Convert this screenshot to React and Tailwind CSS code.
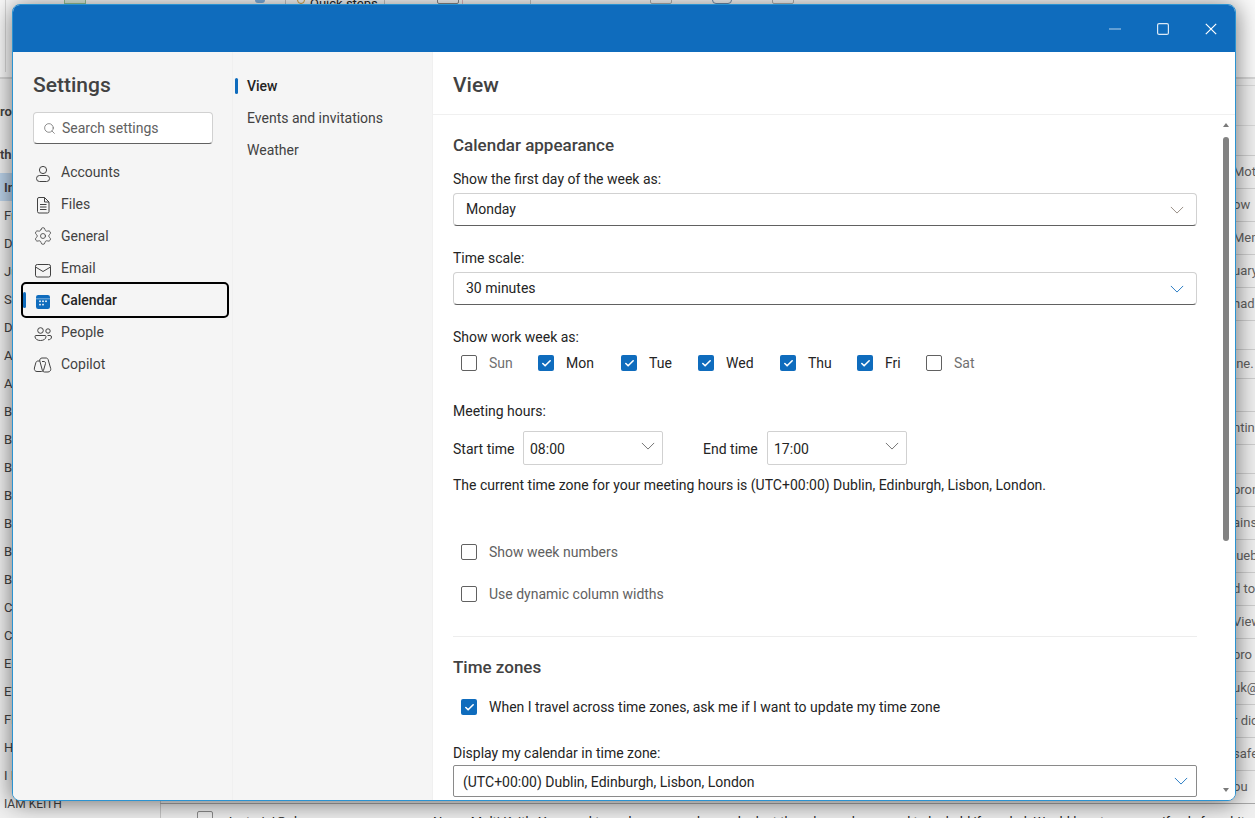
import { Search, Check, Settings } from 'lucide-react'

const font = { fontFamily: 'Roboto' }

function AccountIcon({ className }) {
  return (
    <svg viewBox="0 0 20 20" fill="none" stroke="currentColor" className={className}>
      <circle cx="10" cy="8" r="3.600" />
      <rect x="3.500" y="13.500" width="13" height="6" rx="3" />
    </svg>
  )
}

function FileIcon({ className }) {
  return (
    <svg viewBox="0 0 20 20" fill="none" stroke="currentColor" className={className}>
      <path d="M6 3.500h5.500l4.500 4.500v9.500a1.500 1.500 0 0 1-1.500 1.500H6a1.500 1.500 0 0 1-1.500-1.500V5A1.500 1.500 0 0 1 6 3.500z" />
      <path d="M11.500 3.500V8H16M7 10.500h6.500M7 13h6.500M7 15.500h6.500" />
    </svg>
  )
}

function MailIcon({ className }) {
  return (
    <svg viewBox="0 0 20 20" fill="none" stroke="currentColor" className={className}>
      <rect x="2.500" y="6.500" width="15" height="12.500" rx="1.800" />
      <path d="M2.500 9l7.500 4.500L17.500 9" />
    </svg>
  )
}

function CalendarIcon({ className }) {
  return (
    <svg viewBox="0 0 20 20" className={className}>
      <rect x="3" y="5" width="14" height="14" rx="2.200" fill="currentColor" />
      <path d="M3 8.800h14" stroke="#cfe0f1" strokeWidth="0.600" />
      <g fill="white">
        <rect x="6.200" y="10.500" width="1.600" height="1.600" />
        <rect x="9.200" y="10.500" width="1.600" height="1.600" />
        <rect x="12.200" y="10.500" width="1.600" height="1.600" />
        <rect x="6.200" y="13.800" width="1.600" height="1.600" />
        <rect x="9.200" y="13.800" width="1.600" height="1.600" />
      </g>
    </svg>
  )
}

function PeopleIcon({ className }) {
  return (
    <svg viewBox="0 0 20 20" fill="none" stroke="currentColor" className={className}>
      <circle cx="7.500" cy="8.500" r="2.800" />
      <circle cx="15" cy="9" r="2.200" />
      <path d="M3 13.500h9a1 1 0 0 1 1 1c0 2.500-2.300 4-5.500 4S2 17 2 14.500a1 1 0 0 1 1-1z" />
      <path d="M14.500 13.500H17a1.500 1.500 0 0 1 1.500 1.500c0 1.800-1.500 2.800-3.500 2.800" />
    </svg>
  )
}

function CopilotIcon({ className }) {
  return (
    <svg viewBox="0 0 20 20" fill="none" stroke="currentColor" className={className}>
      <path d="M9 4h4c1 0 1.800.6 2.100 1.500l2.600 9c.4 1.500-.6 3.500-2.700 3.500h-3.500c-1 0-1.800-.6-2.100-1.500L6.800 7C6.300 5.500 7.500 4 9 4z" />
      <path d="M6.800 7H5c-1 0-1.800.6-2.100 1.500l-1.500 5.500C1 16 2.200 17.500 4 17.500h4.500c1 0 1.800-.6 2.100-1.500l1.900-6.500c.3-1-.5-2-1.500-2H9" />
    </svg>
  )
}

const navItems = [
  { label: 'Accounts', icon: AccountIcon },
  { label: 'Files', icon: FileIcon },
  { label: 'General', icon: Settings },
  { label: 'Email', icon: MailIcon },
  { label: 'Calendar', icon: CalendarIcon, active: true },
  { label: 'People', icon: PeopleIcon },
  { label: 'Copilot', icon: CopilotIcon },
]

const days = [
  { label: 'Sun', checked: false, w: 'w-[77px]' },
  { label: 'Mon', checked: true, w: 'w-[83px]' },
  { label: 'Tue', checked: true, w: 'w-[77px]' },
  { label: 'Wed', checked: true, w: 'w-[82px]' },
  { label: 'Thu', checked: true, w: 'w-[77px]' },
  { label: 'Fri', checked: true, w: 'w-[69px]' },
  { label: 'Sat', checked: false, w: 'w-[60px]' },
]

const leftRows = ['Fr', 'D', 'Ju', 'Se', 'D', 'A', 'A', 'B.', 'B', 'B', 'B', 'B.', 'BT', 'BT', 'C', 'C', 'EC', 'EV', 'Fl', 'H', 'I I']

// rows in the mail list that stick out to the right of the dialog
const rightRows = [
  { h: 'h-[33px]', t: 'Moto' },
  { h: 'h-[33px]', t: 'ow' },
  { h: 'h-[33px]', t: 'Men' },
  { h: 'h-[33px]', t: 'uary' },
  { h: 'h-[33px]', t: 'had' },
  { h: 'h-[29px]', t: '' },
  { h: 'h-[29px]', t: 'ine.' },
  { h: 'h-[33px]', t: '' },
  { h: 'h-[33px]', t: 'ntinu' },
  { h: 'h-[29px]', t: '' },
  { h: 'h-[33px]', t: 'pron' },
  { h: 'h-[33px]', t: 'ains' },
  { h: 'h-[33px]', t: 'luebo' },
  { h: 'h-[33px]', t: 'd to' },
  { h: 'h-[33px]', t: 'View' },
  { h: 'h-[33px]', t: 'pro' },
  { h: 'h-[33px]', t: 'uk@' },
  { h: 'h-[33px]', t: 'r dic' },
  { h: 'h-[33px]', t: 'safe' },
  { h: 'h-[33px]', t: 'ou' },
]

function Chevron({ className }) {
  return (
    <svg viewBox="0 0 16 9" fill="none" stroke="currentColor" className={className}>
      <path d="M1 1l7 7 7-7" />
    </svg>
  )
}

function Checkbox({ checked }) {
  if (checked) {
    return (
      <span className="w-[16px] h-[16px] rounded-[2px] bg-[#0f6cbd] flex items-center justify-center shrink-0">
        <Check className="w-[11px] h-[11px] text-white" strokeWidth={3.500} />
      </span>
    )
  }
  return <span className="w-[16px] h-[16px] rounded-[2px] border border-[#616161] bg-white shrink-0" />
}

function Select({ value, chevron = 'text-[#8a7f76]', className = '' }) {
  return (
    <div className={`h-[33px] flex items-center justify-between pl-[12px] pr-[12px] rounded-[4px] border border-[#d1d1d1] border-b-[#616161] bg-white ${className}`}>
      <span className="text-[14px] text-[#242424]">{value}</span>
      <Chevron className={`w-[14px] h-[8px] ${chevron}`} />
    </div>
  )
}

function TimeSelect({ value }) {
  return (
    <div className="w-[140px] h-[34px] flex items-center justify-between pl-[6px] pr-[7px] border border-[#d1d1d1] rounded-[2px] bg-white">
      <span className="pt-[2px] text-[14px] text-[#242424]">{value}</span>
      <Chevron className="w-[14px] h-[8px] text-[#616161] -translate-y-[2px]" />
    </div>
  )
}

function BackgroundApp() {
  return (
    <div className="absolute inset-0 bg-[#f0f0f0] overflow-hidden text-[13px] text-[#424242]">
      <div className="relative h-[79px] bg-[#fafafa] border-b-2 border-[#d6d6d6]">
        <span className="absolute left-[5px] top-0 h-[72px] w-px bg-[#d8d8d8]" />
        <span className="absolute left-[64px] -top-[10px] w-[22px] h-[14px] border border-[#9ac79a] bg-[#dff0df]" />
        <span className="absolute left-[255px] -top-[3px] w-[10px] h-[6px] rounded-full bg-[#7fb0e0]" />
        <span className="absolute left-[285px] top-0 h-[6px] w-px bg-[#c8c8c8]" />
        <span className="absolute left-[297px] -top-[4px] w-[8px] h-[8px] rounded-full border border-[#d9a441]" />
        <span className="absolute left-[384px] top-0 h-[6px] w-px bg-[#c8c8c8]" />
        <span className="absolute left-[437px] -top-[4px] w-[22px] h-[8px] border border-[#8a8a8a] rounded-[2px]" />
        <span className="absolute left-[462px] top-0 h-[6px] w-px bg-[#e3bcc4]" />
        <span className="absolute left-[530px] top-0 h-[6px] w-px bg-[#c8c8c8]" />
        <span className="absolute left-[650px] -top-[4px] w-[22px] h-[8px] border border-[#b5b5b5] rounded-[2px]" />
        <span className="absolute left-[712px] -top-[4px] w-[20px] h-[8px] rounded-full border border-[#6f8fb0]" />
        <span className="absolute left-[772px] -top-[4px] w-[22px] h-[8px] border border-[#b5b5b5] rounded-[2px]" />
        <span className="absolute left-[310px] -top-[6px] text-[13px] text-[#242424]">Quick steps</span>
      </div>
      <div className="absolute left-0 top-[102px] text-[13px] font-semibold">rou</div>
      <div className="absolute left-0 top-[145px] text-[13px] font-semibold">th</div>
      <div className="absolute left-0 top-[173px] w-[13px] h-[28px] bg-[#bcd3ea] text-[13px] font-semibold pt-[5px]">
        <span className="pl-[4px]">In</span>
      </div>
      <div className="absolute left-[4px] top-[202px] w-[156px] flex flex-col">
        {leftRows.map((l, i) => (
          <div key={i} className="h-[28px] flex items-center whitespace-nowrap text-[13px]">{l}</div>
        ))}
        <div className="h-[28px] flex items-center whitespace-nowrap text-[12px]">IAM KEITH</div>
      </div>
      <div className="absolute left-[160px] right-0 top-[85px] h-[41px] border-y border-[#d9d9d9]" />
      <div className="absolute left-[1233px] top-[155px] w-[22px] overflow-hidden flex flex-col border-t border-[#cfcfcf] text-[13px] text-[#616161]">
        {rightRows.map((r, i) => (
          <div key={i} className={`${r.h} shrink-0 border-b border-[#cfcfcf] flex items-center whitespace-nowrap`}>{r.t}</div>
        ))}
      </div>
      <div className="absolute left-[160px] top-[79px] bottom-0 w-px bg-[#c8c8c8]" />
      <div className="absolute left-[160px] right-0 top-[803px] h-[15px] border-t border-[#a8a8a8]">
        <span className="absolute left-[37px] top-[7px] w-[16px] h-[16px] rounded-[2px] border border-[#8a8a8a]" />
        <span className="absolute left-[65px] top-[8px] text-[13px] text-[#242424] whitespace-nowrap">Justrain!@uk</span>
        <span className="absolute left-[273px] top-[8px] text-[13px] text-[#242424] whitespace-nowrap">Name Multi Keith, You need to make sure you have a look at the rules and you need to be held if needed. Would love to see you if only for a bit</span>
      </div>
    </div>
  )
}

export default function App() {
  return (
    <div className="relative w-[1255px] h-[818px] overflow-hidden" style={font}>
      <BackgroundApp />

      {/* settings window */}
      <div className="absolute left-[12px] top-[4px] w-[1224px] h-[797px] flex flex-col rounded-[8px] overflow-hidden border border-[#2b93d1] bg-white shadow-[0_2px_24px_rgba(0,0,0,0.55)]">
        <div className="h-[47px] shrink-0 bg-[#0f6cbd] flex items-center justify-end text-white">
          <div className="w-[48px] flex justify-center">
            <svg viewBox="0 0 12 12" className="w-[12px] h-[12px] text-[#b5d2ec]" fill="none" stroke="currentColor" strokeWidth="1.200"><path d="M0 6h12" /></svg>
          </div>
          <div className="w-[48px] flex justify-center">
            <svg viewBox="0 0 12 12" className="w-[12px] h-[12px] text-[#dbe9f6]" fill="none" stroke="currentColor" strokeWidth="1.200"><rect x="0.600" y="0.600" width="10.800" height="10.800" rx="1.500" /></svg>
          </div>
          <div className="w-[48px] flex justify-center">
            <svg viewBox="0 0 12 12" className="w-[12px] h-[12px]" fill="none" stroke="currentColor" strokeWidth="1.200"><path d="M.8.8l10.400 10.400M11.200.8L.8 11.200" /></svg>
          </div>
        </div>

        <div className="flex-1 flex min-h-0">
          {/* first column */}
          <div className="w-[220px] shrink-0 bg-[#f5f5f5] border-r border-[#f0f0f0] pt-[19px]">
            <div className="pl-[20px] text-[21px] leading-[28px] font-medium text-[#424242]">Settings</div>
            <div className="ml-[20px] mt-[13px] w-[180px] h-[32px] flex items-center pl-[9px] gap-[6px] bg-white rounded-[4px] border border-[#d1d1d1] border-b-[#616161]">
              <Search className="w-[13px] h-[13px] text-[#616161]" strokeWidth={1.300} />
              <span className="text-[14px] text-[#616161]">Search settings</span>
            </div>
            <div className="mt-[12px] px-[8px] flex flex-col">
              {navItems.map(({ label, icon: Icon, active }) => (
                <div key={label} className={`relative w-[208px] flex items-center gap-[8px] ${active ? 'h-[36px] -my-[2px] pl-[10px] border-2 border-black rounded-[5px] z-10' : 'h-[32px] pl-[12px]'}`}>
                  {active && <span className="absolute left-0 top-[8px] w-[3px] h-[16px] bg-[#0f6cbd] rounded-full" />}
                  <Icon className={`w-[20px] h-[20px] ${active ? 'text-[#0f6cbd]' : 'text-[#424242]'}`} strokeWidth={1} />
                  <span className={`text-[14px] ${active ? 'font-medium text-[#242424]' : 'text-[#424242]'}`}>{label}</span>
                </div>
              ))}
            </div>
          </div>

          {/* second column */}
          <div className="w-[200px] shrink-0 bg-[#f5f5f5] border-r border-[#f0f0f0] pt-[18px] pl-[2px]">
            <div className="relative h-[32px] flex items-center pl-[12px] text-[14px] font-medium text-[#242424]">
              <span className="absolute left-0 top-[8px] w-[3px] h-[16px] bg-[#0f6cbd] rounded-full" />
              View
            </div>
            <div className="h-[32px] flex items-center pl-[12px] text-[14px] text-[#424242]">Events and invitations</div>
            <div className="h-[32px] flex items-center pl-[12px] text-[14px] text-[#424242]">Weather</div>
          </div>

          {/* content */}
          <div className="flex-1 min-w-0 flex flex-col bg-white">
            <div className="h-[63px] shrink-0 border-b border-[#f0f0f0] pl-[20px] pt-[6px] flex items-center text-[21px] font-medium text-[#424242]">View</div>
            <div className="flex-1 min-h-0 flex overflow-hidden">
              <div className="w-[744px] ml-[20px] shrink-0 pt-[17px]">
                <div className="text-[17px] leading-[26px] font-medium text-[#424242]">Calendar appearance</div>
                <div className="mt-[11px] text-[14px] leading-[20px] text-[#242424]">Show the first day of the week as:</div>
                <Select value="Monday" className="mt-[4px]" />
                <div className="mt-[22px] text-[14px] leading-[20px] text-[#242424]">Time scale:</div>
                <Select value="30 minutes" className="mt-[4px]" chevron="text-[#0f6cbd]" />
                <div className="mt-[22px] text-[14px] leading-[20px] text-[#242424]">Show work week as:</div>
                <div className="mt-[6px] ml-[8px] h-[20px] flex items-center">
                  {days.map((d) => (
                    <div key={d.label} className={`${d.w} flex items-center gap-[12px]`}>
                      <Checkbox checked={d.checked} />
                      <span className={`text-[14px] ${d.checked ? 'text-[#242424]' : 'text-[#707070]'}`}>{d.label}</span>
                    </div>
                  ))}
                </div>
                <div className="mt-[28px] text-[14px] leading-[20px] text-[#242424]">Meeting hours:</div>
                <div className="mt-[10px] flex items-center">
                  <span className="w-[70px] pt-[2px] text-[14px] text-[#242424]">Start time</span>
                  <TimeSelect value="08:00" />
                  <span className="ml-[40px] w-[64px] pt-[2px] text-[14px] text-[#242424]">End time</span>
                  <TimeSelect value="17:00" />
                </div>
                <div className="mt-[10px] text-[14px] leading-[20px] text-[#242424]">The current time zone for your meeting hours is (UTC+00:00) Dublin, Edinburgh, Lisbon, London.</div>
                <div className="mt-[47px] ml-[8px] h-[20px] flex items-center gap-[12px]">
                  <Checkbox />
                  <span className="text-[14px] text-[#616161]">Show week numbers</span>
                </div>
                <div className="mt-[22px] ml-[8px] h-[20px] flex items-center gap-[12px]">
                  <Checkbox />
                  <span className="text-[14px] text-[#616161]">Use dynamic column widths</span>
                </div>
                <div className="mt-[32px] border-t border-[#ededed]" />
                <div className="mt-[17px] text-[17px] leading-[26px] font-medium text-[#424242]">Time zones</div>
                <div className="mt-[17px] ml-[8px] h-[20px] flex items-center gap-[12px]">
                  <Checkbox checked />
                  <span className="text-[14px] text-[#242424]">When I travel across time zones, ask me if I want to update my time zone</span>
                </div>
                <div className="mt-[26px] text-[14px] leading-[20px] text-[#242424]">Display my calendar in time zone:</div>
                <div className="mt-[2px] h-[32px] flex items-center justify-between pl-[9px] pr-[8px] rounded-[2px] border border-[#8a8a8a] bg-white">
                  <span className="pt-[2px] text-[14px] text-[#242424]">(UTC+00:00) Dublin, Edinburgh, Lisbon, London</span>
                  <Chevron className="w-[14px] h-[8px] text-[#0f6cbd]" />
                </div>
              </div>

              {/* scrollbar */}
              <div className="ml-[21px] w-[16px] flex flex-col items-center pt-[8px] pb-[8px]">
                <span className="w-0 h-0 border-x-[3px] border-x-transparent border-b-[4px] border-b-[#7a7a7a]" />
                <span className="mt-[10px] w-[6px] h-[404px] bg-[#828282] rounded-full" />
                <span className="mt-auto w-0 h-0 border-x-[3px] border-x-transparent border-t-[4px] border-t-[#7a7a7a]" />
              </div>
            </div>
          </div>
        </div>
      </div>
    </div>
  )
}
